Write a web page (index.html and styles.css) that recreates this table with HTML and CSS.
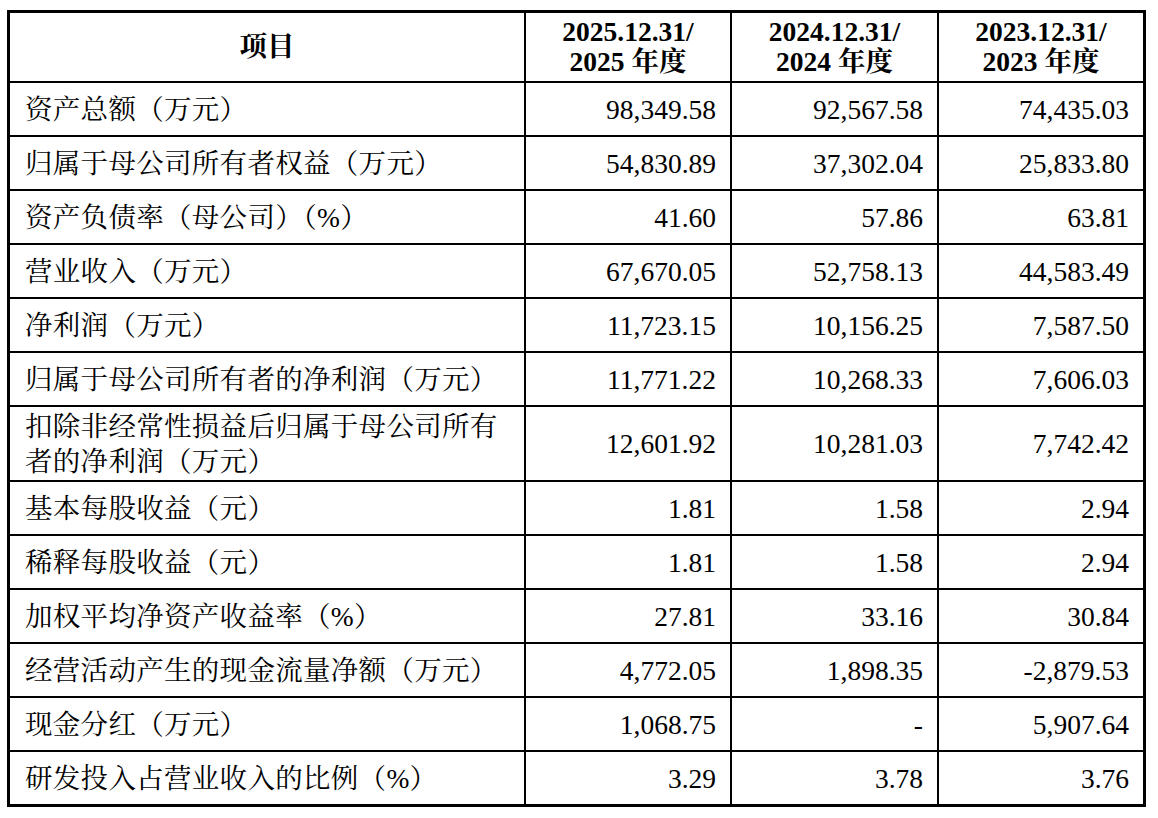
FILE: index.html
```html
<!DOCTYPE html>
<html lang="zh-CN">
<head>
<meta charset="utf-8">
<title>主要财务数据</title>
<link rel="stylesheet" href="styles.css">
</head>
<body>
<div class="page">
<table class="fin">
<colgroup>
<col class="c-item">
<col class="c-v1">
<col class="c-v2">
<col class="c-v3">
</colgroup>
<thead>
<tr class="head">
<th class="item-h">项目</th>
<th>2025.12.31/<br>2025 年度</th>
<th>2024.12.31/<br>2024 年度</th>
<th class="last">2023.12.31/<br>2023 年度</th>
</tr>
</thead>
<tbody>
<tr><td class="lbl">资产总额（万元）</td><td>98,349.58</td><td>92,567.58</td><td class="last">74,435.03</td></tr>
<tr><td class="lbl">归属于母公司所有者权益（万元）</td><td>54,830.89</td><td>37,302.04</td><td class="last">25,833.80</td></tr>
<tr><td class="lbl">资产负债率（母公司）（%）</td><td>41.60</td><td>57.86</td><td class="last">63.81</td></tr>
<tr><td class="lbl">营业收入（万元）</td><td>67,670.05</td><td>52,758.13</td><td class="last">44,583.49</td></tr>
<tr><td class="lbl">净利润（万元）</td><td>11,723.15</td><td>10,156.25</td><td class="last">7,587.50</td></tr>
<tr><td class="lbl">归属于母公司所有者的净利润（万元）</td><td>11,771.22</td><td>10,268.33</td><td class="last">7,606.03</td></tr>
<tr class="tall"><td class="lbl">扣除非经常性损益后归属于母公司所有<br>者的净利润（万元）</td><td>12,601.92</td><td>10,281.03</td><td class="last">7,742.42</td></tr>
<tr><td class="lbl">基本每股收益（元）</td><td>1.81</td><td>1.58</td><td class="last">2.94</td></tr>
<tr><td class="lbl">稀释每股收益（元）</td><td>1.81</td><td>1.58</td><td class="last">2.94</td></tr>
<tr><td class="lbl">加权平均净资产收益率（%）</td><td>27.81</td><td>33.16</td><td class="last">30.84</td></tr>
<tr><td class="lbl">经营活动产生的现金流量净额（万元）</td><td>4,772.05</td><td>1,898.35</td><td class="last">-2,879.53</td></tr>
<tr><td class="lbl">现金分红（万元）</td><td>1,068.75</td><td>-</td><td class="last">5,907.64</td></tr>
<tr class="end"><td class="lbl">研发投入占营业收入的比例（%）</td><td>3.29</td><td>3.78</td><td class="last">3.76</td></tr>
</tbody>
</table>
</div>
</body>
</html>
```

FILE: styles.css
```css
html, body {
  margin: 0;
  padding: 0;
  background: #ffffff;
}

.page {
  padding: 10px 0 0 7px;
}

.fin {
  border-collapse: separate;
  border-spacing: 0;
  border: 3px solid #000;
  table-layout: fixed;
  width: 1139px;
  color: #000;
  font-family: "Liberation Serif", "Noto Serif CJK SC", "Noto Sans CJK SC", serif;
  font-size: 27.5px;
}

.c-item { width: 516px; }
.c-v1 { width: 206px; }
.c-v2 { width: 207px; }
.c-v3 { width: 204px; }

.fin th,
.fin td {
  border-right: 2px solid #000;
  border-bottom: 2px solid #000;
  padding: 0 14px 0 15px;
  vertical-align: middle;
  box-sizing: content-box;
}

.fin .last {
  border-right: none;
}

.fin .end td {
  border-bottom: none;
}

.head th {
  height: 68px;
  font-weight: bold;
  line-height: 30px;
  text-align: center;
  padding: 0;
}

.fin td {
  height: 52px;
  line-height: 35px;
  text-align: right;
  font-weight: normal;
}

.fin td.lbl {
  text-align: left;
  padding-left: 15px;
  letter-spacing: 0.3px;
  white-space: nowrap;
}

.fin .tall td {
  height: 73px;
}
```
